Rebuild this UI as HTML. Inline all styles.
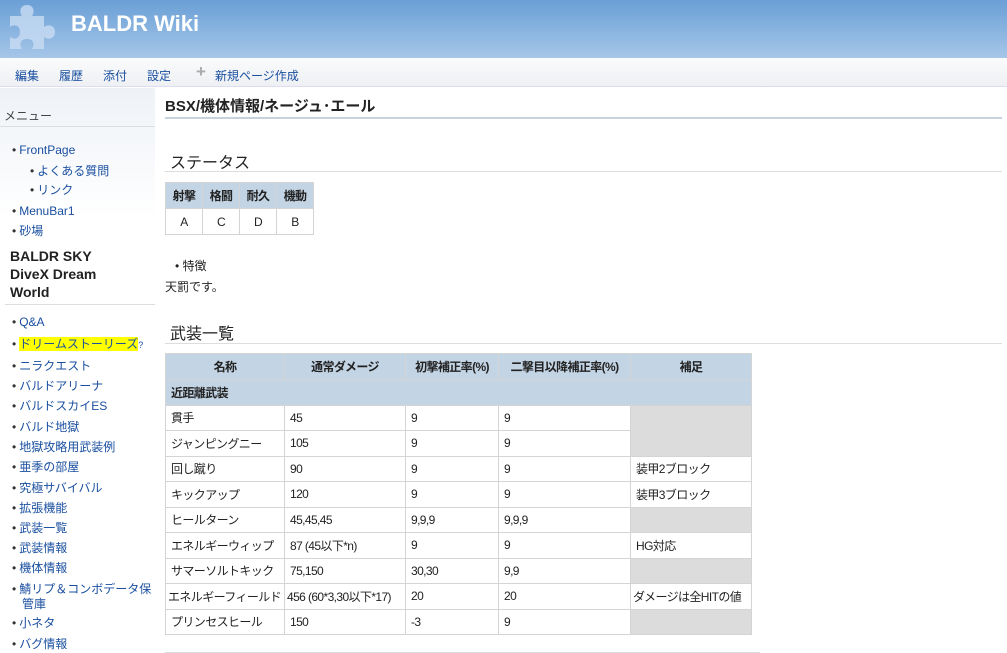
<!DOCTYPE html>
<html><head><meta charset="utf-8">
<style>
*{margin:0;padding:0;box-sizing:border-box}
body{width:1007px;height:653px;overflow:hidden;background:#fff;font-family:"Liberation Sans","Noto Sans CJK JP",sans-serif;font-size:12px;color:#222;position:relative}
.hdr{position:absolute;left:0;top:0;width:1007px;height:58px;background:linear-gradient(#6a9fd6,#a6c6e8)}
.hdr .t{position:absolute;left:71px;top:11px;color:#fff;font-size:22px;font-weight:bold}
.nav{position:absolute;left:0;top:58px;width:1007px;height:29px;background:linear-gradient(#fafbfc,#eef0f3);border-bottom:1px solid #dde}
.nav span{position:absolute;top:9px;color:#1a4fa0;font-size:12px}
.side{position:absolute;left:0;top:88px;width:155px;height:130px;background:linear-gradient(#eef2f7,#fff)}
.a{position:absolute;color:#1a4fa0;white-space:nowrap}
.a:before{content:"•";color:#333;margin-right:3px}
.abs{position:absolute;white-space:nowrap}
.h{position:absolute;font-size:16px;color:#222}
.line{position:absolute;height:1px;background:#ddd}
table{position:absolute;border-collapse:collapse;table-layout:fixed}
td,th{border:1px solid #d4d4d4;padding:0 5px;font-size:12px;height:25.5px;text-align:left;font-weight:normal;white-space:nowrap;overflow:hidden;letter-spacing:-0.6px}
th{background:#c3d4e4;font-weight:bold;text-align:center}
.g{background:#dcdcdc}
</style></head><body>
<div class="hdr">
<svg style="position:absolute;left:6px;top:2px" width="54" height="50" viewBox="0 0 54 50"><path d="M4 14h12c-3-4-2-11 5-11s8 7 5 11h12v11c4-3 11-2 11 5s-7 8-11 5v12H26c3-4 2-10-5-10s-8 6-5 10H4V35c4 3 10 2 10-5s-6-8-10-5z" fill="#c8dcf2" opacity=".8"/></svg>
<div class="t">BALDR Wiki</div></div>
<div class="nav"><span style="left:15px">編集</span><span style="left:59px">履歴</span><span style="left:103px">添付</span><span style="left:147px">設定</span><span style="left:196px;color:#aaa;font-size:17px;top:4px;font-weight:bold;line-height:20px">+</span><span style="left:215px">新規ページ作成</span></div>
<div class="side"></div>
<div class="abs" style="left:4px;top:107px;color:#444">メニュー</div>
<div class="line" style="left:0;top:126px;width:155px"></div>
<div class="a" style="left:12px;top:143px">FrontPage</div>
<div class="a" style="left:30px;top:162px">よくある質問</div>
<div class="a" style="left:30px;top:181px">リンク</div>
<div class="a" style="left:12px;top:204px">MenuBar1</div>
<div class="a" style="left:12px;top:222px">砂場</div>
<div class="abs" style="left:10px;top:247px;font-size:14px;font-weight:bold;line-height:18px">BALDR SKY<br>DiveX Dream<br>World</div>
<div class="line" style="left:5px;top:304px;width:150px"></div>
<div class="a" style="left:12px;top:315px">Q&amp;A</div>
<div class="a" style="left:12px;top:335px"><span style="background:#ff0">ドリームストーリーズ</span><span style="font-size:9px">?</span></div>
<div class="a" style="left:12px;top:357px">ニラクエスト</div>
<div class="a" style="left:12px;top:377px">バルドアリーナ</div>
<div class="a" style="left:12px;top:397px">バルドスカイES</div>
<div class="a" style="left:12px;top:418px">バルド地獄</div>
<div class="a" style="left:12px;top:438px">地獄攻略用武装例</div>
<div class="a" style="left:12px;top:458px">亜季の部屋</div>
<div class="a" style="left:12px;top:479px">究極サバイバル</div>
<div class="a" style="left:12px;top:499px">拡張機能</div>
<div class="a" style="left:12px;top:519px">武装一覧</div>
<div class="a" style="left:12px;top:539px">武装情報</div>
<div class="a" style="left:12px;top:559px">機体情報</div>
<div class="a" style="left:12px;top:580px">鯖リプ＆コンボデータ保</div>
<div class="abs" style="left:22px;top:595px;color:#1a4fa0">管庫</div>
<div class="a" style="left:12px;top:614px">小ネタ</div>
<div class="a" style="left:12px;top:635px">バグ情報</div>

<div class="h" style="left:165px;top:95px;font-weight:bold;font-size:15px">BSX/機体情報/ネージュ･エール</div>
<div class="line" style="left:165px;top:117px;width:837px;height:2px;background:#c6d2de"></div>
<div class="h" style="left:170px;top:149px">ステータス</div>
<div class="line" style="left:165px;top:171px;width:837px"></div>
<table style="left:165px;top:182px;width:149px"><tr><th style="height:26px;padding:0">射撃</th><th style="padding:0">格闘</th><th style="padding:0">耐久</th><th style="padding:0">機動</th></tr>
<tr><td style="text-align:center;height:26px">A</td><td style="text-align:center">C</td><td style="text-align:center">D</td><td style="text-align:center">B</td></tr></table>
<div class="abs" style="left:175px;top:257px">•&nbsp;特徴</div>
<div class="abs" style="left:165px;top:278px">天罰です。</div>
<div class="h" style="left:170px;top:320px">武装一覧</div>
<div class="line" style="left:165px;top:343px;width:837px"></div>
<table style="left:165px;top:353px;width:586px">
<colgroup><col style="width:119px"><col style="width:121px"><col style="width:93px"><col style="width:132px"><col style="width:121px"></colgroup>
<tr><th style="height:26px">名称</th><th>通常ダメージ</th><th style="padding:0">初撃補正率(%)</th><th style="padding:0">二撃目以降補正率(%)</th><th>補足</th></tr>
<tr><th colspan="5" style="text-align:left">近距離武装</th></tr>
<tr><td>貫手</td><td>45</td><td>9</td><td>9</td><td class="g" rowspan="2"></td></tr>
<tr><td>ジャンピングニー</td><td>105</td><td>9</td><td>9</td></tr>
<tr><td>回し蹴り</td><td>90</td><td>9</td><td>9</td><td>装甲2ブロック</td></tr>
<tr><td>キックアップ</td><td>120</td><td>9</td><td>9</td><td>装甲3ブロック</td></tr>
<tr><td>ヒールターン</td><td>45,45,45</td><td>9,9,9</td><td>9,9,9</td><td class="g"></td></tr>
<tr><td>エネルギーウィップ</td><td>87 (45以下*n)</td><td>9</td><td>9</td><td>HG対応</td></tr>
<tr><td>サマーソルトキック</td><td>75,150</td><td>30,30</td><td>9,9</td><td class="g"></td></tr>
<tr><td style="padding:0 2px">エネルギーフィールド</td><td style="padding:0 2px">456 (60*3,30以下*17)</td><td>20</td><td>20</td><td style="padding:0 2px">ダメージは全HITの値</td></tr>
<tr><td>プリンセスヒール</td><td>150</td><td>-3</td><td>9</td><td class="g"></td></tr>
</table>
<div class="line" style="left:165px;top:652px;width:595px"></div>
</body></html>
